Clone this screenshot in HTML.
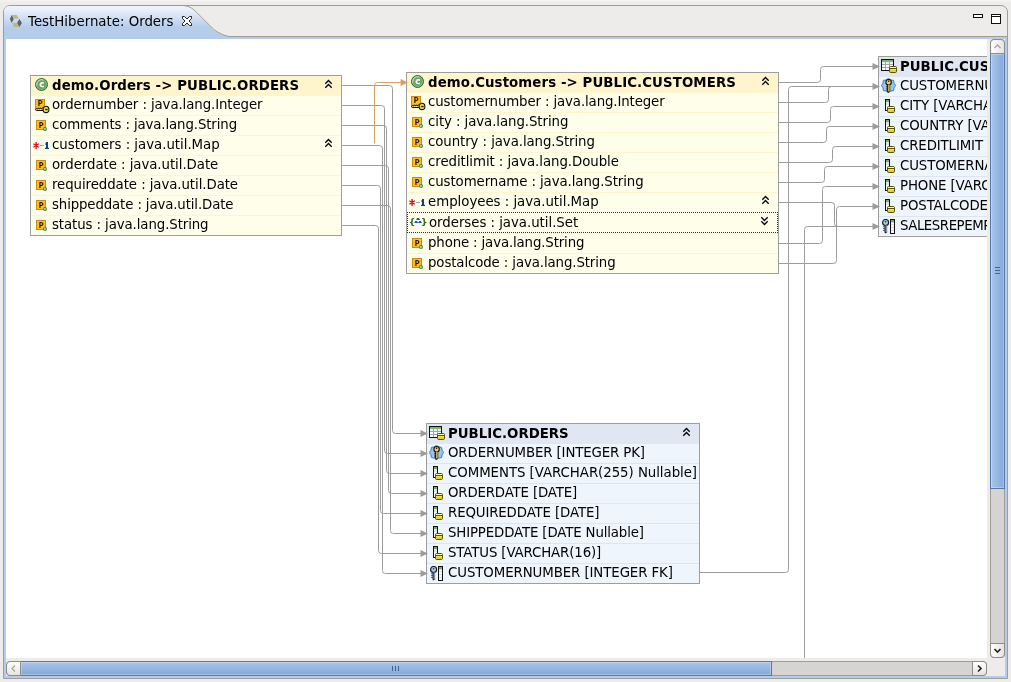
<!DOCTYPE html>
<html><head><meta charset="utf-8"><title>TestHibernate: Orders</title>
<style>
html,body{margin:0;padding:0;}
body{width:1011px;height:682px;overflow:hidden;background:#edeceb;position:relative;font-family:'DejaVu Sans','Liberation Sans',sans-serif;font-size:13.33px;color:#000;}
div,svg{position:absolute;box-sizing:border-box;}
#root{left:0;top:0;width:1011px;height:682px;will-change:transform;}
.t{white-space:nowrap;line-height:20px;height:20px;}
.b{font-weight:bold;}
.cbox{border:1px solid #9e9e9e;background:#fffeea;overflow:hidden;}
.chead{left:0;top:0;right:0;height:20px;background:#fff5cd;}
.csep{left:0;right:0;height:1px;background:#fff5cd;}
.tbox{border:1px solid #9e9e9e;background:#eef5fd;overflow:hidden;}
.thead{left:0;top:0;right:0;height:20px;background:#e0e7f2;}
.tsep{left:0;right:0;height:1px;background:#dde5f1;}
</style></head>
<body>
<div id="root">
<div style="left:0;top:0;width:1011px;height:2px;background:#f3f2f1;"></div>
<div id="frame" style="left:3px;top:5px;width:1005px;height:674px;border:1px solid #a09c96;border-radius:7px 7px 0 0;background:#edeceb;"></div>
<div id="blue" style="left:4px;top:37px;width:1003px;height:641px;background:#b5cdeb;"></div>
<div id="inner" style="left:6px;top:39px;width:999px;height:637px;background:#edeceb;"></div>
<svg id="tab" style="left:0;top:0" width="1011" height="40" viewBox="0 0 1011 40">
<defs><linearGradient id="tg" x1="0" y1="0" x2="0" y2="1"><stop offset="0" stop-color="#eef3fb"/><stop offset="0.12" stop-color="#e9f0fa"/><stop offset="0.68" stop-color="#b5cdeb"/><stop offset="1" stop-color="#b5cdeb"/></linearGradient></defs>
<path d="M4 37 L4 12 Q4 6 10 6 L182 6 C188 6 192 8.3 196.5 12.7 L212.5 28.7 C215.5 31.7 222 35.2 229 36.5 L1007 36.5 L1007 37 Z" fill="url(#tg)"/>
<path d="M182 5.5 C188 5.5 192 7.8 196.5 12.2 L212.5 28.2 C215.5 31.2 222 35 229 36.5 L1007 36.5" fill="none" stroke="#a09c96" stroke-width="1"/>
</svg>
<svg style="left:9px;top:14px" width="14" height="14" viewBox="9 14 14 14">
<polygon points="9.9,19 11.7,14.9 13.8,19 11.7,23" fill="#59646a"/>
<polygon points="11.7,14.9 16.6,14.9 19,18.4 14.2,18.4" fill="#c3b47a"/>
<polygon points="19.4,19 21.9,23 19.4,27 17,23" fill="#59646a"/>
<polygon points="12.2,23 17,23 19.4,27 14.2,27" fill="#c3b47a"/>
</svg>
<div class="t" style="left:28px;top:12px;">TestHibernate: Orders</div>
<svg style="left:181px;top:15px" width="12" height="12" viewBox="0 0 12 12">
<path d="M1.5 1.5 L3.5 1.5 L6 4 L8.5 1.5 L10.5 1.5 L10.5 3.5 L8 6 L10.5 8.5 L10.5 10.5 L8.5 10.5 L6 8 L3.5 10.5 L1.5 10.5 L1.5 8.5 L4 6 L1.5 3.5 Z" fill="#fff" stroke="#222" stroke-width="1"/>
</svg>
<div style="left:973px;top:14px;width:10px;height:4px;border:1px solid #111;background:#fff;"></div>
<div style="left:991px;top:14px;width:10px;height:10px;border:1px solid #111;background:#fff;"></div>
<div style="left:991px;top:16px;width:10px;height:1px;background:#111;"></div>
<div id="canvas" style="left:6px;top:39px;width:981px;height:619px;background:#fff;overflow:hidden;">
<svg style="left:0;top:0" width="981" height="619" viewBox="0 0 981 619"><path d="M335 46.5 L383.5 46.5 Q386.5 46.5 386.5 49.5 L386.5 391.5 Q386.5 394.5 389.5 394.5 L420.5 394.5" fill="none" stroke="#9c9c9c" stroke-width="1"/>
<path d="M335 66.5 L375.5 66.5 Q378.5 66.5 378.5 69.5 L378.5 411.5 Q378.5 414.5 381.5 414.5 L420.5 414.5" fill="none" stroke="#9c9c9c" stroke-width="1"/>
<path d="M335 86.5 L377.5 86.5 Q380.5 86.5 380.5 89.5 L380.5 431.5 Q380.5 434.5 383.5 434.5 L420.5 434.5" fill="none" stroke="#9c9c9c" stroke-width="1"/>
<path d="M335 106.5 L373.5 106.5 Q376.5 106.5 376.5 109.5 L376.5 531.5 Q376.5 534.5 379.5 534.5 L420.5 534.5" fill="none" stroke="#9c9c9c" stroke-width="1"/>
<path d="M335 126.5 L379.5 126.5 Q382.5 126.5 382.5 129.5 L382.5 451.5 Q382.5 454.5 385.5 454.5 L420.5 454.5" fill="none" stroke="#9c9c9c" stroke-width="1"/>
<path d="M335 146.5 L371.5 146.5 Q374.5 146.5 374.5 149.5 L374.5 471.5 Q374.5 474.5 377.5 474.5 L420.5 474.5" fill="none" stroke="#9c9c9c" stroke-width="1"/>
<path d="M335 166.5 L381.5 166.5 Q384.5 166.5 384.5 169.5 L384.5 491.5 Q384.5 494.5 387.5 494.5 L420.5 494.5" fill="none" stroke="#9c9c9c" stroke-width="1"/>
<path d="M335 186.5 L369.5 186.5 Q372.5 186.5 372.5 189.5 L372.5 511.5 Q372.5 514.5 375.5 514.5 L420.5 514.5" fill="none" stroke="#9c9c9c" stroke-width="1"/>
<path d="M368.5 104.5 L368.5 46.5 Q368.5 43.5 371.5 43.5 L400.5 43.5" fill="none" stroke="#d9a066" stroke-width="1"/>
<path d="M772 43.5 L811.5 43.5 Q814.5 43.5 814.5 40.5 L814.5 30.5 Q814.5 27.5 817.5 27.5 L872.5 27.5" fill="none" stroke="#9c9c9c" stroke-width="1"/>
<path d="M772 63.5 L819.5 63.5 Q822.5 63.5 822.5 60.5 L822.5 50.5 Q822.5 47.5 825.5 47.5 L872.5 47.5" fill="none" stroke="#9c9c9c" stroke-width="1"/>
<path d="M693 533.5 L779.5 533.5 Q782.5 533.5 782.5 530.5 L782.5 50.5 Q782.5 47.5 785.5 47.5 L872.5 47.5" fill="none" stroke="#9c9c9c" stroke-width="1"/>
<path d="M772 83.5 L821.5 83.5 Q824.5 83.5 824.5 80.5 L824.5 70.5 Q824.5 67.5 827.5 67.5 L872.5 67.5" fill="none" stroke="#9c9c9c" stroke-width="1"/>
<path d="M772 103.5 L817.5 103.5 Q820.5 103.5 820.5 100.5 L820.5 90.5 Q820.5 87.5 823.5 87.5 L872.5 87.5" fill="none" stroke="#9c9c9c" stroke-width="1"/>
<path d="M772 123.5 L823.5 123.5 Q826.5 123.5 826.5 120.5 L826.5 110.5 Q826.5 107.5 829.5 107.5 L872.5 107.5" fill="none" stroke="#9c9c9c" stroke-width="1"/>
<path d="M772 143.5 L815.5 143.5 Q818.5 143.5 818.5 140.5 L818.5 130.5 Q818.5 127.5 821.5 127.5 L872.5 127.5" fill="none" stroke="#9c9c9c" stroke-width="1"/>
<path d="M772 204.5 L813.5 204.5 Q816.5 204.5 816.5 201.5 L816.5 150.5 Q816.5 147.5 819.5 147.5 L872.5 147.5" fill="none" stroke="#9c9c9c" stroke-width="1"/>
<path d="M772 224.5 L827.5 224.5 Q830.5 224.5 830.5 221.5 L830.5 170.5 Q830.5 167.5 833.5 167.5 L872.5 167.5" fill="none" stroke="#9c9c9c" stroke-width="1"/>
<path d="M772 163.5 L825.5 163.5 Q828.5 163.5 828.5 166.5 L828.5 184.5 Q828.5 187.5 831.5 187.5 L872.5 187.5" fill="none" stroke="#9c9c9c" stroke-width="1"/>
<path d="M798.5 661 L798.5 190.5 Q798.5 187.5 801.5 187.5 L872.5 187.5" fill="none" stroke="#9c9c9c" stroke-width="1"/></svg>
<div class="cbox" style="left:24px;top:36px;width:312px;height:161px;">
<div class="chead"></div>
<svg style="left:4px;top:2px" width="13" height="13" viewBox="0 0 13 13"><circle cx="6.5" cy="6.5" r="6" fill="#69a368" stroke="#2e6b36" stroke-width="1"/><circle cx="6.5" cy="6.5" r="4.9" fill="none" stroke="#8fc08d" stroke-width="0.8"/><path d="M1.8 7.6 A4.9 4.9 0 0 1 8.4 2" fill="none" stroke="#cfe8cb" stroke-width="0.9"/><text x="6.8" y="9" font-size="6.4" font-weight="bold" text-anchor="middle" fill="#fff" stroke="#fff" stroke-width="0.35" font-family="'DejaVu Sans','Liberation Sans',sans-serif">C</text></svg>
<div class="t b" style="left:21px;top:0px;letter-spacing:0.102px;">demo.Orders -&gt; PUBLIC.ORDERS</div>
<div class="csep" style="top:39px;"></div>
<svg style="left:4px;top:23px" width="16" height="15" viewBox="0 0 16 15"><rect x="0.5" y="0.5" width="9" height="9" fill="#fdbb24" stroke="#c98c12"/><text x="5.2" y="7.4" font-size="7.8" text-anchor="middle" fill="#000" stroke="#000" stroke-width="0.22" font-family="'DejaVu Sans','Liberation Sans',sans-serif">P</text><path d="M0.4 10.9 L1.6 9.4 L2.5 10.2 L3.5 8.8 L4.5 10.2 L5.5 8.8 L6.5 10.2 L7.5 8.8 L8.6 9.6 L8.8 11.5 L1.3 11.5 Z" fill="#f9f2a4" stroke="#141000" stroke-width="1" stroke-linejoin="round"/><ellipse cx="11" cy="10.4" rx="2.9" ry="3.2" fill="#ead850" stroke="#141000" stroke-width="1.1"/><path d="M10.2 10.5 H12.6" stroke="#141000" stroke-width="1.3"/><path d="M8.6 8.8 L10.2 7.4" stroke="#2c7a3c" stroke-width="0.9"/></svg>
<div class="t" style="left:21px;top:19px;letter-spacing:-0.097px;">ordernumber : java.lang.Integer</div>
<div class="csep" style="top:59px;"></div>
<svg style="left:5px;top:44px" width="14" height="13" viewBox="0 0 14 13"><rect x="0.5" y="0.5" width="9" height="9" fill="#fdbb24" stroke="#c98c12"/><text x="5.2" y="7.9" font-size="7.8" text-anchor="middle" fill="#000" stroke="#000" stroke-width="0.22" font-family="'DejaVu Sans','Liberation Sans',sans-serif">P</text><circle cx="9" cy="9" r="2" fill="#3c8744"/><circle cx="8.9" cy="8.9" r="1" fill="#bfe69a"/></svg>
<div class="t" style="left:21px;top:39px;letter-spacing:-0.119px;">comments : java.lang.String</div>
<div class="csep" style="top:79px;"></div>
<svg style="left:2px;top:66px" width="18" height="8" viewBox="0 0 18 8"><path d="M3.1 0.1 V6.9 M0.4 1.8 L5.8 5.2 M5.8 1.8 L0.4 5.2" stroke="#dc0a1c" stroke-width="1.35" fill="none"/><path d="M7 3.5 H11" stroke="#9ba3ad" stroke-width="1"/><path d="M14 0.1 V6.2" stroke="#07477f" stroke-width="2" fill="none"/><path d="M12.2 2.4 L13.4 1.5" stroke="#07477f" stroke-width="1.1" fill="none"/><path d="M12 6.4 H16" stroke="#07477f" stroke-width="1.3" fill="none"/></svg>
<div class="t" style="left:21px;top:59px;letter-spacing:-0.025px;">customers : java.util.Map</div>
<div class="csep" style="top:99px;"></div>
<svg style="left:5px;top:84px" width="14" height="13" viewBox="0 0 14 13"><rect x="0.5" y="0.5" width="9" height="9" fill="#fdbb24" stroke="#c98c12"/><text x="5.2" y="7.9" font-size="7.8" text-anchor="middle" fill="#000" stroke="#000" stroke-width="0.22" font-family="'DejaVu Sans','Liberation Sans',sans-serif">P</text><circle cx="9" cy="9" r="2" fill="#3c8744"/><circle cx="8.9" cy="8.9" r="1" fill="#bfe69a"/></svg>
<div class="t" style="left:21px;top:79px;letter-spacing:-0.056px;">orderdate : java.util.Date</div>
<div class="csep" style="top:119px;"></div>
<svg style="left:5px;top:104px" width="14" height="13" viewBox="0 0 14 13"><rect x="0.5" y="0.5" width="9" height="9" fill="#fdbb24" stroke="#c98c12"/><text x="5.2" y="7.9" font-size="7.8" text-anchor="middle" fill="#000" stroke="#000" stroke-width="0.22" font-family="'DejaVu Sans','Liberation Sans',sans-serif">P</text><circle cx="9" cy="9" r="2" fill="#3c8744"/><circle cx="8.9" cy="8.9" r="1" fill="#bfe69a"/></svg>
<div class="t" style="left:21px;top:99px;letter-spacing:-0.076px;">requireddate : java.util.Date</div>
<div class="csep" style="top:139px;"></div>
<svg style="left:5px;top:124px" width="14" height="13" viewBox="0 0 14 13"><rect x="0.5" y="0.5" width="9" height="9" fill="#fdbb24" stroke="#c98c12"/><text x="5.2" y="7.9" font-size="7.8" text-anchor="middle" fill="#000" stroke="#000" stroke-width="0.22" font-family="'DejaVu Sans','Liberation Sans',sans-serif">P</text><circle cx="9" cy="9" r="2" fill="#3c8744"/><circle cx="8.9" cy="8.9" r="1" fill="#bfe69a"/></svg>
<div class="t" style="left:21px;top:119px;letter-spacing:-0.132px;">shippeddate : java.util.Date</div>
<div class="csep" style="top:159px;"></div>
<svg style="left:5px;top:144px" width="14" height="13" viewBox="0 0 14 13"><rect x="0.5" y="0.5" width="9" height="9" fill="#fdbb24" stroke="#c98c12"/><text x="5.2" y="7.9" font-size="7.8" text-anchor="middle" fill="#000" stroke="#000" stroke-width="0.22" font-family="'DejaVu Sans','Liberation Sans',sans-serif">P</text><circle cx="9" cy="9" r="2" fill="#3c8744"/><circle cx="8.9" cy="8.9" r="1" fill="#bfe69a"/></svg>
<div class="t" style="left:21px;top:139px;letter-spacing:-0.096px;">status : java.lang.String</div>
<svg style="left:293px;top:3px" width="9" height="10" viewBox="0 0 9 10"><path d="M1.3 4.7 L4.5 1.5 L7.7 4.7 M1.3 8.7 L4.5 5.5 L7.7 8.7" fill="none" stroke="#000" stroke-width="1.35"/></svg><svg style="left:293px;top:62px" width="9" height="10" viewBox="0 0 9 10"><path d="M1.3 4.7 L4.5 1.5 L7.7 4.7 M1.3 8.7 L4.5 5.5 L7.7 8.7" fill="none" stroke="#000" stroke-width="1.35"/></svg>
</div>
<div class="cbox" style="left:400px;top:33px;width:373px;height:202px;">
<div class="chead"></div>
<svg style="left:4px;top:2px" width="13" height="13" viewBox="0 0 13 13"><circle cx="6.5" cy="6.5" r="6" fill="#69a368" stroke="#2e6b36" stroke-width="1"/><circle cx="6.5" cy="6.5" r="4.9" fill="none" stroke="#8fc08d" stroke-width="0.8"/><path d="M1.8 7.6 A4.9 4.9 0 0 1 8.4 2" fill="none" stroke="#cfe8cb" stroke-width="0.9"/><text x="6.8" y="9" font-size="6.4" font-weight="bold" text-anchor="middle" fill="#fff" stroke="#fff" stroke-width="0.35" font-family="'DejaVu Sans','Liberation Sans',sans-serif">C</text></svg>
<div class="t b" style="left:21px;top:0px;letter-spacing:0.094px;">demo.Customers -&gt; PUBLIC.CUSTOMERS</div>
<div class="csep" style="top:39px;"></div>
<svg style="left:4px;top:23px" width="16" height="15" viewBox="0 0 16 15"><rect x="0.5" y="0.5" width="9" height="9" fill="#fdbb24" stroke="#c98c12"/><text x="5.2" y="7.4" font-size="7.8" text-anchor="middle" fill="#000" stroke="#000" stroke-width="0.22" font-family="'DejaVu Sans','Liberation Sans',sans-serif">P</text><path d="M0.4 10.9 L1.6 9.4 L2.5 10.2 L3.5 8.8 L4.5 10.2 L5.5 8.8 L6.5 10.2 L7.5 8.8 L8.6 9.6 L8.8 11.5 L1.3 11.5 Z" fill="#f9f2a4" stroke="#141000" stroke-width="1" stroke-linejoin="round"/><ellipse cx="11" cy="10.4" rx="2.9" ry="3.2" fill="#ead850" stroke="#141000" stroke-width="1.1"/><path d="M10.2 10.5 H12.6" stroke="#141000" stroke-width="1.3"/><path d="M8.6 8.8 L10.2 7.4" stroke="#2c7a3c" stroke-width="0.9"/></svg>
<div class="t" style="left:21px;top:19px;letter-spacing:-0.121px;">customernumber : java.lang.Integer</div>
<div class="csep" style="top:59px;"></div>
<svg style="left:5px;top:44px" width="14" height="13" viewBox="0 0 14 13"><rect x="0.5" y="0.5" width="9" height="9" fill="#fdbb24" stroke="#c98c12"/><text x="5.2" y="7.9" font-size="7.8" text-anchor="middle" fill="#000" stroke="#000" stroke-width="0.22" font-family="'DejaVu Sans','Liberation Sans',sans-serif">P</text><circle cx="9" cy="9" r="2" fill="#3c8744"/><circle cx="8.9" cy="8.9" r="1" fill="#bfe69a"/></svg>
<div class="t" style="left:21px;top:39px;letter-spacing:-0.077px;">city : java.lang.String</div>
<div class="csep" style="top:79px;"></div>
<svg style="left:5px;top:64px" width="14" height="13" viewBox="0 0 14 13"><rect x="0.5" y="0.5" width="9" height="9" fill="#fdbb24" stroke="#c98c12"/><text x="5.2" y="7.9" font-size="7.8" text-anchor="middle" fill="#000" stroke="#000" stroke-width="0.22" font-family="'DejaVu Sans','Liberation Sans',sans-serif">P</text><circle cx="9" cy="9" r="2" fill="#3c8744"/><circle cx="8.9" cy="8.9" r="1" fill="#bfe69a"/></svg>
<div class="t" style="left:21px;top:59px;letter-spacing:-0.08px;">country : java.lang.String</div>
<div class="csep" style="top:99px;"></div>
<svg style="left:5px;top:84px" width="14" height="13" viewBox="0 0 14 13"><rect x="0.5" y="0.5" width="9" height="9" fill="#fdbb24" stroke="#c98c12"/><text x="5.2" y="7.9" font-size="7.8" text-anchor="middle" fill="#000" stroke="#000" stroke-width="0.22" font-family="'DejaVu Sans','Liberation Sans',sans-serif">P</text><circle cx="9" cy="9" r="2" fill="#3c8744"/><circle cx="8.9" cy="8.9" r="1" fill="#bfe69a"/></svg>
<div class="t" style="left:21px;top:79px;letter-spacing:-0.066px;">creditlimit : java.lang.Double</div>
<div class="csep" style="top:119px;"></div>
<svg style="left:5px;top:104px" width="14" height="13" viewBox="0 0 14 13"><rect x="0.5" y="0.5" width="9" height="9" fill="#fdbb24" stroke="#c98c12"/><text x="5.2" y="7.9" font-size="7.8" text-anchor="middle" fill="#000" stroke="#000" stroke-width="0.22" font-family="'DejaVu Sans','Liberation Sans',sans-serif">P</text><circle cx="9" cy="9" r="2" fill="#3c8744"/><circle cx="8.9" cy="8.9" r="1" fill="#bfe69a"/></svg>
<div class="t" style="left:21px;top:99px;letter-spacing:-0.087px;">customername : java.lang.String</div>
<div class="csep" style="top:139px;"></div>
<svg style="left:2px;top:126px" width="18" height="8" viewBox="0 0 18 8"><path d="M3.1 0.1 V6.9 M0.4 1.8 L5.8 5.2 M5.8 1.8 L0.4 5.2" stroke="#dc0a1c" stroke-width="1.35" fill="none"/><path d="M7 3.5 H11" stroke="#9ba3ad" stroke-width="1"/><path d="M14 0.1 V6.2" stroke="#07477f" stroke-width="2" fill="none"/><path d="M12.2 2.4 L13.4 1.5" stroke="#07477f" stroke-width="1.1" fill="none"/><path d="M12 6.4 H16" stroke="#07477f" stroke-width="1.3" fill="none"/></svg>
<div class="t" style="left:21px;top:119px;letter-spacing:-0.025px;">employees : java.util.Map</div>
<div class="csep" style="top:160px;"></div>
<svg style="left:0px;top:140px" width="22" height="16" viewBox="0 0 22 16"><text x="1.8" y="11.8" font-size="9.2" font-weight="bold" fill="#2e6b1e" font-family="'DejaVu Sans','Liberation Sans',sans-serif">{</text><text x="13.9" y="11.8" font-size="9.2" font-weight="bold" fill="#2e6b1e" font-family="'DejaVu Sans','Liberation Sans',sans-serif">}</text><path d="M9 7 L9.5 6.2 L10.2 5 L11.9 5 L12.6 6.2 L13.1 7 Z" fill="#1553b5"/><path d="M7.1 10 L7.7 9.1 L8.4 8 L9.8 8 L10.5 9.1 L11.05 9.8 L11.6 9.1 L12.3 8 L13.7 8 L14.4 9.1 L15 10 Z" fill="#1553b5"/></svg>
<div class="t" style="left:22px;top:140px;letter-spacing:-0.035px;">orderses : java.util.Set</div>
<div class="csep" style="top:180px;"></div>
<svg style="left:5px;top:165px" width="14" height="13" viewBox="0 0 14 13"><rect x="0.5" y="0.5" width="9" height="9" fill="#fdbb24" stroke="#c98c12"/><text x="5.2" y="7.9" font-size="7.8" text-anchor="middle" fill="#000" stroke="#000" stroke-width="0.22" font-family="'DejaVu Sans','Liberation Sans',sans-serif">P</text><circle cx="9" cy="9" r="2" fill="#3c8744"/><circle cx="8.9" cy="8.9" r="1" fill="#bfe69a"/></svg>
<div class="t" style="left:21px;top:160px;letter-spacing:-0.139px;">phone : java.lang.String</div>
<div class="csep" style="top:200px;"></div>
<svg style="left:5px;top:185px" width="14" height="13" viewBox="0 0 14 13"><rect x="0.5" y="0.5" width="9" height="9" fill="#fdbb24" stroke="#c98c12"/><text x="5.2" y="7.9" font-size="7.8" text-anchor="middle" fill="#000" stroke="#000" stroke-width="0.22" font-family="'DejaVu Sans','Liberation Sans',sans-serif">P</text><circle cx="9" cy="9" r="2" fill="#3c8744"/><circle cx="8.9" cy="8.9" r="1" fill="#bfe69a"/></svg>
<div class="t" style="left:21px;top:180px;letter-spacing:-0.111px;">postalcode : java.lang.String</div>
<svg style="left:354px;top:3px" width="9" height="10" viewBox="0 0 9 10"><path d="M1.3 4.7 L4.5 1.5 L7.7 4.7 M1.3 8.7 L4.5 5.5 L7.7 8.7" fill="none" stroke="#000" stroke-width="1.35"/></svg><svg style="left:354px;top:122px" width="9" height="10" viewBox="0 0 9 10"><path d="M1.3 4.7 L4.5 1.5 L7.7 4.7 M1.3 8.7 L4.5 5.5 L7.7 8.7" fill="none" stroke="#000" stroke-width="1.35"/></svg><svg style="left:353px;top:143px" width="9" height="10" viewBox="0 0 9 10"><path d="M1.3 1.3 L4.5 4.5 L7.7 1.3 M1.3 5.3 L4.5 8.5 L7.7 5.3" fill="none" stroke="#000" stroke-width="1.35"/></svg><div style="left:0px;top:139px;width:371px;height:1px;background:#fffeea;"></div><div style="left:0px;top:139px;width:371px;height:21px;border:1px dotted #333;"></div>
</div>
<div class="tbox" style="left:420px;top:384px;width:274px;height:161px;">
<div class="thead"></div>
<svg style="left:2px;top:2px" width="17" height="15" viewBox="0 0 17 15"><rect x="0.5" y="0.5" width="12" height="11" fill="#fff" stroke="#111"/><rect x="1" y="1" width="11" height="2" fill="#88b267"/><rect x="1" y="3" width="11" height="2" fill="#dcf6fb"/><path d="M4.5 3 V11 M8.5 3 V11 M1 5.5 H12 M1 8.5 H12" stroke="#a4a4a4" stroke-width="1"/><rect x="8.5" y="7.5" width="7" height="6" rx="1.2" fill="#e2d232" stroke="#5a5200"/><rect x="9" y="8" width="6" height="1" fill="#fffab4"/><path d="M8.5 9.5 H15.5" stroke="#5a5200" stroke-width="1"/><rect x="9" y="10" width="6" height="1" fill="#f4e84a"/></svg>
<div class="t b" style="left:21px;top:0px;">PUBLIC.ORDERS</div>
<div class="tsep" style="top:39px;"></div>
<svg style="left:2px;top:21px" width="15" height="15" viewBox="0 0 15 15"><polygon points="7.50,0.30 9.80,1.96 12.59,2.41 13.04,5.20 14.70,7.50 13.04,9.80 12.59,12.59 9.80,13.04 7.50,14.70 5.20,13.04 2.41,12.59 1.96,9.80 0.30,7.50 1.96,5.20 2.41,2.41 5.20,1.96" fill="#9ac4ef" stroke="#2a7fdc" stroke-width="1" stroke-linejoin="round"/><circle cx="7.6" cy="4.2" r="2.7" fill="#f5d34c" stroke="#151000" stroke-width="1.1"/><circle cx="7.6" cy="3.3" r="0.8" fill="#151000"/><path d="M7.7 6.8 V13.2 L8.3 14" stroke="#151000" stroke-width="3" fill="none"/><path d="M7.9 6.6 V13.4" stroke="#f5d34c" stroke-width="1.4"/><path d="M5.2 8.3 H6.8 M5.2 10.1 H6.8 M5.2 11.9 H6.8" stroke="#151000" stroke-width="0.9"/></svg>
<div class="t" style="left:21px;top:19px;letter-spacing:-0.122px;">ORDERNUMBER [INTEGER PK]</div>
<div class="tsep" style="top:59px;"></div>
<svg style="left:6px;top:42px" width="11" height="15" viewBox="0 0 11 15"><rect x="0.5" y="0.5" width="4" height="11" fill="#eefaff" stroke="#111"/><rect x="1" y="1" width="3" height="2.2" fill="#78ad5c"/><rect x="1" y="4.6" width="3" height="0.8" fill="#c4c4c4"/><rect x="2.5" y="7.5" width="7" height="6" rx="1.2" fill="#e2d232" stroke="#5a5200"/><rect x="3" y="8" width="6" height="1" fill="#fffab4"/><path d="M2.5 9.5 H9.5" stroke="#5a5200" stroke-width="1"/><rect x="3" y="10" width="6" height="1" fill="#f4e84a"/></svg>
<div class="t" style="left:21px;top:39px;letter-spacing:-0.048px;">COMMENTS [VARCHAR(255) Nullable]</div>
<div class="tsep" style="top:79px;"></div>
<svg style="left:6px;top:62px" width="11" height="15" viewBox="0 0 11 15"><rect x="0.5" y="0.5" width="4" height="11" fill="#eefaff" stroke="#111"/><rect x="1" y="1" width="3" height="2.2" fill="#78ad5c"/><rect x="1" y="4.6" width="3" height="0.8" fill="#c4c4c4"/><rect x="2.5" y="7.5" width="7" height="6" rx="1.2" fill="#e2d232" stroke="#5a5200"/><rect x="3" y="8" width="6" height="1" fill="#fffab4"/><path d="M2.5 9.5 H9.5" stroke="#5a5200" stroke-width="1"/><rect x="3" y="10" width="6" height="1" fill="#f4e84a"/></svg>
<div class="t" style="left:21px;top:59px;letter-spacing:-0.173px;">ORDERDATE [DATE]</div>
<div class="tsep" style="top:99px;"></div>
<svg style="left:6px;top:82px" width="11" height="15" viewBox="0 0 11 15"><rect x="0.5" y="0.5" width="4" height="11" fill="#eefaff" stroke="#111"/><rect x="1" y="1" width="3" height="2.2" fill="#78ad5c"/><rect x="1" y="4.6" width="3" height="0.8" fill="#c4c4c4"/><rect x="2.5" y="7.5" width="7" height="6" rx="1.2" fill="#e2d232" stroke="#5a5200"/><rect x="3" y="8" width="6" height="1" fill="#fffab4"/><path d="M2.5 9.5 H9.5" stroke="#5a5200" stroke-width="1"/><rect x="3" y="10" width="6" height="1" fill="#f4e84a"/></svg>
<div class="t" style="left:21px;top:79px;letter-spacing:-0.133px;">REQUIREDDATE [DATE]</div>
<div class="tsep" style="top:119px;"></div>
<svg style="left:6px;top:102px" width="11" height="15" viewBox="0 0 11 15"><rect x="0.5" y="0.5" width="4" height="11" fill="#eefaff" stroke="#111"/><rect x="1" y="1" width="3" height="2.2" fill="#78ad5c"/><rect x="1" y="4.6" width="3" height="0.8" fill="#c4c4c4"/><rect x="2.5" y="7.5" width="7" height="6" rx="1.2" fill="#e2d232" stroke="#5a5200"/><rect x="3" y="8" width="6" height="1" fill="#fffab4"/><path d="M2.5 9.5 H9.5" stroke="#5a5200" stroke-width="1"/><rect x="3" y="10" width="6" height="1" fill="#f4e84a"/></svg>
<div class="t" style="left:21px;top:99px;letter-spacing:-0.146px;">SHIPPEDDATE [DATE Nullable]</div>
<div class="tsep" style="top:139px;"></div>
<svg style="left:6px;top:122px" width="11" height="15" viewBox="0 0 11 15"><rect x="0.5" y="0.5" width="4" height="11" fill="#eefaff" stroke="#111"/><rect x="1" y="1" width="3" height="2.2" fill="#78ad5c"/><rect x="1" y="4.6" width="3" height="0.8" fill="#c4c4c4"/><rect x="2.5" y="7.5" width="7" height="6" rx="1.2" fill="#e2d232" stroke="#5a5200"/><rect x="3" y="8" width="6" height="1" fill="#fffab4"/><path d="M2.5 9.5 H9.5" stroke="#5a5200" stroke-width="1"/><rect x="3" y="10" width="6" height="1" fill="#f4e84a"/></svg>
<div class="t" style="left:21px;top:119px;letter-spacing:-0.127px;">STATUS [VARCHAR(16)]</div>
<div class="tsep" style="top:159px;"></div>
<svg style="left:3px;top:142px" width="15" height="16" viewBox="0 0 15 16"><circle cx="3.6" cy="3.5" r="3" fill="#b0c6de" stroke="#141c26" stroke-width="1.15"/><circle cx="3.6" cy="2.7" r="0.8" fill="#27313c"/><path d="M3.8 6.3 V13 L4.4 13.8" stroke="#1c242e" stroke-width="2.6" fill="none"/><path d="M4.2 6.4 V13" stroke="#c8d8e8" stroke-width="0.9"/><path d="M1.2 7.8 H2.8 M1.2 9.6 H2.8 M1.2 11.4 H2.8" stroke="#27313c" stroke-width="0.9"/><rect x="8.5" y="0.5" width="4" height="14" fill="#f2fbff" stroke="#111"/><rect x="9" y="1" width="3" height="2.4" fill="#78ad5c"/><path d="M9 5.5 H12 M9 8.5 H12 M9 11.5 H12" stroke="#d4d4d4" stroke-width="0.8"/></svg>
<div class="t" style="left:21px;top:139px;letter-spacing:-0.083px;">CUSTOMERNUMBER [INTEGER FK]</div>
<svg style="left:255px;top:3px" width="9" height="10" viewBox="0 0 9 10"><path d="M1.3 4.7 L4.5 1.5 L7.7 4.7 M1.3 8.7 L4.5 5.5 L7.7 8.7" fill="none" stroke="#000" stroke-width="1.35"/></svg>
</div>
<div class="tbox" style="left:872px;top:17px;width:300px;height:181px;">
<div class="thead"></div>
<svg style="left:2px;top:2px" width="17" height="15" viewBox="0 0 17 15"><rect x="0.5" y="0.5" width="12" height="11" fill="#fff" stroke="#111"/><rect x="1" y="1" width="11" height="2" fill="#88b267"/><rect x="1" y="3" width="11" height="2" fill="#dcf6fb"/><path d="M4.5 3 V11 M8.5 3 V11 M1 5.5 H12 M1 8.5 H12" stroke="#a4a4a4" stroke-width="1"/><rect x="8.5" y="7.5" width="7" height="6" rx="1.2" fill="#e2d232" stroke="#5a5200"/><rect x="9" y="8" width="6" height="1" fill="#fffab4"/><path d="M8.5 9.5 H15.5" stroke="#5a5200" stroke-width="1"/><rect x="9" y="10" width="6" height="1" fill="#f4e84a"/></svg>
<div class="t b" style="left:21px;top:0px;">PUBLIC.CUSTOMERS</div>
<div class="tsep" style="top:39px;"></div>
<svg style="left:2px;top:21px" width="15" height="15" viewBox="0 0 15 15"><polygon points="7.50,0.30 9.80,1.96 12.59,2.41 13.04,5.20 14.70,7.50 13.04,9.80 12.59,12.59 9.80,13.04 7.50,14.70 5.20,13.04 2.41,12.59 1.96,9.80 0.30,7.50 1.96,5.20 2.41,2.41 5.20,1.96" fill="#9ac4ef" stroke="#2a7fdc" stroke-width="1" stroke-linejoin="round"/><circle cx="7.6" cy="4.2" r="2.7" fill="#f5d34c" stroke="#151000" stroke-width="1.1"/><circle cx="7.6" cy="3.3" r="0.8" fill="#151000"/><path d="M7.7 6.8 V13.2 L8.3 14" stroke="#151000" stroke-width="3" fill="none"/><path d="M7.9 6.6 V13.4" stroke="#f5d34c" stroke-width="1.4"/><path d="M5.2 8.3 H6.8 M5.2 10.1 H6.8 M5.2 11.9 H6.8" stroke="#151000" stroke-width="0.9"/></svg>
<div class="t" style="left:21px;top:19px;letter-spacing:-0.12px;">CUSTOMERNUMBER [INTEGER PK]</div>
<div class="tsep" style="top:59px;"></div>
<svg style="left:6px;top:42px" width="11" height="15" viewBox="0 0 11 15"><rect x="0.5" y="0.5" width="4" height="11" fill="#eefaff" stroke="#111"/><rect x="1" y="1" width="3" height="2.2" fill="#78ad5c"/><rect x="1" y="4.6" width="3" height="0.8" fill="#c4c4c4"/><rect x="2.5" y="7.5" width="7" height="6" rx="1.2" fill="#e2d232" stroke="#5a5200"/><rect x="3" y="8" width="6" height="1" fill="#fffab4"/><path d="M2.5 9.5 H9.5" stroke="#5a5200" stroke-width="1"/><rect x="3" y="10" width="6" height="1" fill="#f4e84a"/></svg>
<div class="t" style="left:21px;top:39px;letter-spacing:-0.12px;">CITY [VARCHAR(50)]</div>
<div class="tsep" style="top:79px;"></div>
<svg style="left:6px;top:62px" width="11" height="15" viewBox="0 0 11 15"><rect x="0.5" y="0.5" width="4" height="11" fill="#eefaff" stroke="#111"/><rect x="1" y="1" width="3" height="2.2" fill="#78ad5c"/><rect x="1" y="4.6" width="3" height="0.8" fill="#c4c4c4"/><rect x="2.5" y="7.5" width="7" height="6" rx="1.2" fill="#e2d232" stroke="#5a5200"/><rect x="3" y="8" width="6" height="1" fill="#fffab4"/><path d="M2.5 9.5 H9.5" stroke="#5a5200" stroke-width="1"/><rect x="3" y="10" width="6" height="1" fill="#f4e84a"/></svg>
<div class="t" style="left:21px;top:59px;letter-spacing:-0.12px;">COUNTRY [VARCHAR(50)]</div>
<div class="tsep" style="top:99px;"></div>
<svg style="left:6px;top:82px" width="11" height="15" viewBox="0 0 11 15"><rect x="0.5" y="0.5" width="4" height="11" fill="#eefaff" stroke="#111"/><rect x="1" y="1" width="3" height="2.2" fill="#78ad5c"/><rect x="1" y="4.6" width="3" height="0.8" fill="#c4c4c4"/><rect x="2.5" y="7.5" width="7" height="6" rx="1.2" fill="#e2d232" stroke="#5a5200"/><rect x="3" y="8" width="6" height="1" fill="#fffab4"/><path d="M2.5 9.5 H9.5" stroke="#5a5200" stroke-width="1"/><rect x="3" y="10" width="6" height="1" fill="#f4e84a"/></svg>
<div class="t" style="left:21px;top:79px;letter-spacing:-0.12px;">CREDITLIMIT [DOUBLE Nullable]</div>
<div class="tsep" style="top:119px;"></div>
<svg style="left:6px;top:102px" width="11" height="15" viewBox="0 0 11 15"><rect x="0.5" y="0.5" width="4" height="11" fill="#eefaff" stroke="#111"/><rect x="1" y="1" width="3" height="2.2" fill="#78ad5c"/><rect x="1" y="4.6" width="3" height="0.8" fill="#c4c4c4"/><rect x="2.5" y="7.5" width="7" height="6" rx="1.2" fill="#e2d232" stroke="#5a5200"/><rect x="3" y="8" width="6" height="1" fill="#fffab4"/><path d="M2.5 9.5 H9.5" stroke="#5a5200" stroke-width="1"/><rect x="3" y="10" width="6" height="1" fill="#f4e84a"/></svg>
<div class="t" style="left:21px;top:99px;letter-spacing:-0.12px;">CUSTOMERNAME [VARCHAR(50)]</div>
<div class="tsep" style="top:139px;"></div>
<svg style="left:6px;top:122px" width="11" height="15" viewBox="0 0 11 15"><rect x="0.5" y="0.5" width="4" height="11" fill="#eefaff" stroke="#111"/><rect x="1" y="1" width="3" height="2.2" fill="#78ad5c"/><rect x="1" y="4.6" width="3" height="0.8" fill="#c4c4c4"/><rect x="2.5" y="7.5" width="7" height="6" rx="1.2" fill="#e2d232" stroke="#5a5200"/><rect x="3" y="8" width="6" height="1" fill="#fffab4"/><path d="M2.5 9.5 H9.5" stroke="#5a5200" stroke-width="1"/><rect x="3" y="10" width="6" height="1" fill="#f4e84a"/></svg>
<div class="t" style="left:21px;top:119px;letter-spacing:-0.12px;">PHONE [VARCHAR(50)]</div>
<div class="tsep" style="top:159px;"></div>
<svg style="left:6px;top:142px" width="11" height="15" viewBox="0 0 11 15"><rect x="0.5" y="0.5" width="4" height="11" fill="#eefaff" stroke="#111"/><rect x="1" y="1" width="3" height="2.2" fill="#78ad5c"/><rect x="1" y="4.6" width="3" height="0.8" fill="#c4c4c4"/><rect x="2.5" y="7.5" width="7" height="6" rx="1.2" fill="#e2d232" stroke="#5a5200"/><rect x="3" y="8" width="6" height="1" fill="#fffab4"/><path d="M2.5 9.5 H9.5" stroke="#5a5200" stroke-width="1"/><rect x="3" y="10" width="6" height="1" fill="#f4e84a"/></svg>
<div class="t" style="left:21px;top:139px;letter-spacing:-0.12px;">POSTALCODE [VARCHAR(15) Nullable]</div>
<div class="tsep" style="top:179px;"></div>
<svg style="left:3px;top:162px" width="15" height="16" viewBox="0 0 15 16"><circle cx="3.6" cy="3.5" r="3" fill="#b0c6de" stroke="#141c26" stroke-width="1.15"/><circle cx="3.6" cy="2.7" r="0.8" fill="#27313c"/><path d="M3.8 6.3 V13 L4.4 13.8" stroke="#1c242e" stroke-width="2.6" fill="none"/><path d="M4.2 6.4 V13" stroke="#c8d8e8" stroke-width="0.9"/><path d="M1.2 7.8 H2.8 M1.2 9.6 H2.8 M1.2 11.4 H2.8" stroke="#27313c" stroke-width="0.9"/><rect x="8.5" y="0.5" width="4" height="14" fill="#f2fbff" stroke="#111"/><rect x="9" y="1" width="3" height="2.4" fill="#78ad5c"/><path d="M9 5.5 H12 M9 8.5 H12 M9 11.5 H12" stroke="#d4d4d4" stroke-width="0.8"/></svg>
<div class="t" style="left:21px;top:159px;letter-spacing:-0.46px;">SALESREPEMPLOYEENUMBER [INTEGER FK]</div>
</div>
<svg style="left:0;top:0" width="981" height="619" viewBox="0 0 981 619"><polygon points="422,394.5 414.5,391 414.5,398" fill="#9c9c9c"/>
<polygon points="422,414.5 414.5,411 414.5,418" fill="#9c9c9c"/>
<polygon points="422,434.5 414.5,431 414.5,438" fill="#9c9c9c"/>
<polygon points="422,534.5 414.5,531 414.5,538" fill="#9c9c9c"/>
<polygon points="422,454.5 414.5,451 414.5,458" fill="#9c9c9c"/>
<polygon points="422,474.5 414.5,471 414.5,478" fill="#9c9c9c"/>
<polygon points="422,494.5 414.5,491 414.5,498" fill="#9c9c9c"/>
<polygon points="422,514.5 414.5,511 414.5,518" fill="#9c9c9c"/>
<polygon points="402,43.5 394.5,40 394.5,47" fill="#d9a066"/>
<polygon points="874,27.5 866.5,24 866.5,31" fill="#9c9c9c"/>
<polygon points="874,47.5 866.5,44 866.5,51" fill="#9c9c9c"/>
<polygon points="874,67.5 866.5,64 866.5,71" fill="#9c9c9c"/>
<polygon points="874,87.5 866.5,84 866.5,91" fill="#9c9c9c"/>
<polygon points="874,107.5 866.5,104 866.5,111" fill="#9c9c9c"/>
<polygon points="874,127.5 866.5,124 866.5,131" fill="#9c9c9c"/>
<polygon points="874,147.5 866.5,144 866.5,151" fill="#9c9c9c"/>
<polygon points="874,167.5 866.5,164 866.5,171" fill="#9c9c9c"/>
<polygon points="874,187.5 866.5,184 866.5,191" fill="#9c9c9c"/></svg>
</div>
<div style="left:990px;top:39px;width:15px;height:619px;background:#d6d4d2;border:1px solid #a09c96;border-radius:4px;"></div>
<div style="left:990px;top:39px;width:15px;height:15px;background:linear-gradient(to right,#ffffff,#e6e4e1);border:1px solid #8f8b85;border-radius:4px 4px 0 0;"></div>
<svg style="left:990px;top:39px" width="15" height="15" viewBox="0 0 15 15"><path d="M4.5 9 L7.5 6 L10.5 9" fill="none" stroke="#aaa6a0" stroke-width="1.3"/></svg>
<div style="left:990px;top:54px;width:15px;height:435px;background:linear-gradient(to right,#a9c5ea,#84a8da);border:1px solid #5479a8;border-top-width:0;box-shadow:inset 0 0 0 1px rgba(255,255,255,0.28);"></div>
<svg style="left:990px;top:264px" width="15" height="14" viewBox="0 0 15 14"><path d="M5 3.5 H10 M5 6.5 H10 M5 9.5 H10" stroke="#456590" stroke-width="1"/></svg>
<div style="left:990px;top:643px;width:15px;height:15px;background:linear-gradient(to right,#ffffff,#e6e4e1);border:1px solid #8f8b85;border-radius:0 0 4px 4px;"></div>
<svg style="left:990px;top:643px" width="15" height="15" viewBox="0 0 15 15"><path d="M4.5 6 L7.5 9 L10.5 6" fill="none" stroke="#222" stroke-width="1.6"/></svg>
<div style="left:6px;top:661px;width:981px;height:15px;background:#d6d4d2;border:1px solid #a09c96;border-radius:4px;"></div>
<div style="left:6px;top:661px;width:15px;height:15px;background:linear-gradient(to bottom,#ffffff,#e6e4e1);border:1px solid #8f8b85;border-radius:4px 0 0 4px;"></div>
<svg style="left:6px;top:661px" width="15" height="15" viewBox="0 0 15 15"><path d="M9 4.5 L6 7.5 L9 10.5" fill="none" stroke="#aaa6a0" stroke-width="1.3"/></svg>
<div style="left:21px;top:661px;width:751px;height:15px;background:linear-gradient(to bottom,#a9c5ea,#84a8da);border:1px solid #5479a8;border-left-width:0;box-shadow:inset 0 0 0 1px rgba(255,255,255,0.28);"></div>
<svg style="left:389px;top:661px" width="14" height="15" viewBox="0 0 14 15"><path d="M3.5 5 V10 M6.5 5 V10 M9.5 5 V10" stroke="#456590" stroke-width="1"/></svg>
<div style="left:972px;top:661px;width:15px;height:15px;background:linear-gradient(to bottom,#ffffff,#e6e4e1);border:1px solid #8f8b85;border-radius:0 4px 4px 0;"></div>
<svg style="left:972px;top:661px" width="15" height="15" viewBox="0 0 15 15"><path d="M6 4.5 L9 7.5 L6 10.5" fill="none" stroke="#222" stroke-width="1.6"/></svg>
</div>
</body></html>
